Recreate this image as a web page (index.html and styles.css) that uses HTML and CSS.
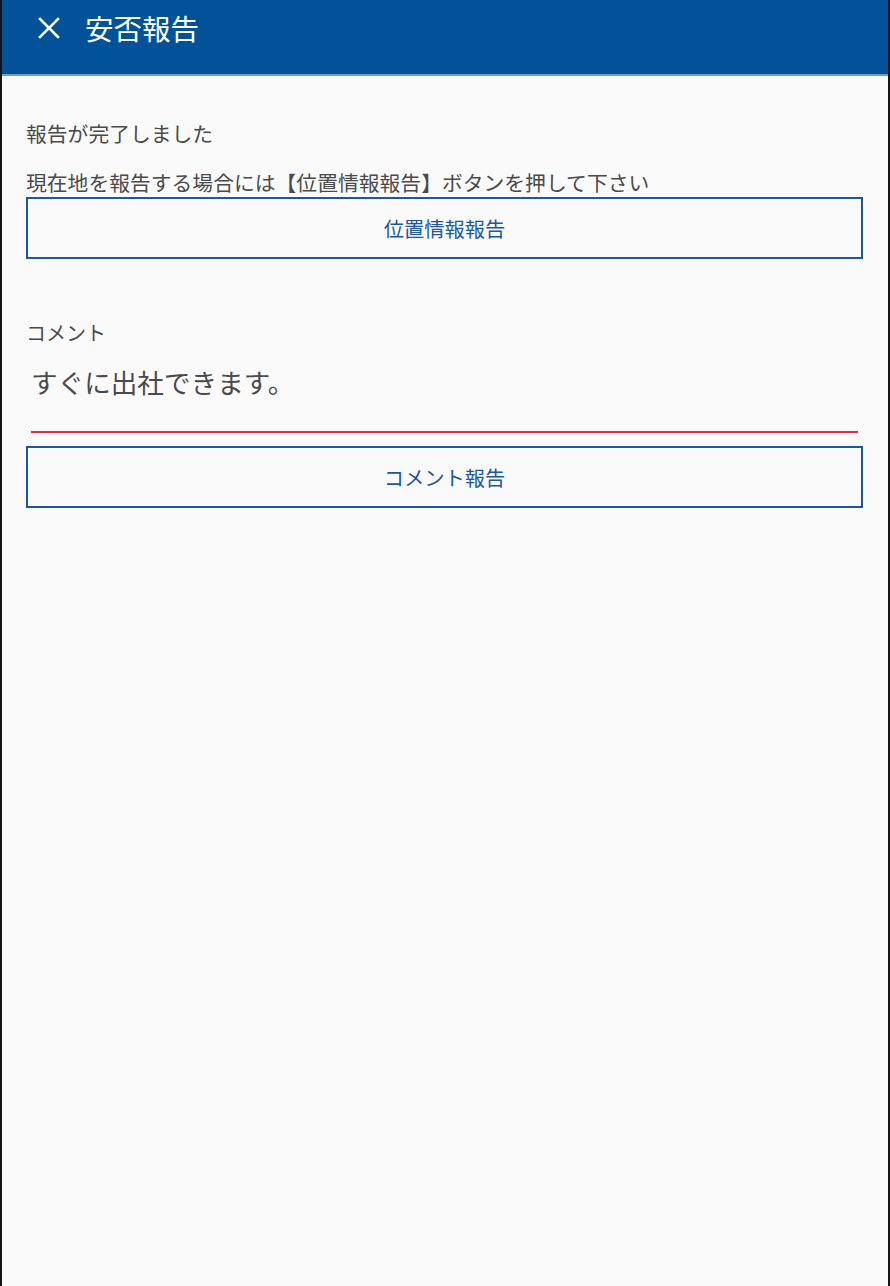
FILE: index.html
```html
<!DOCTYPE html>
<html lang="ja">
<head>
  <meta charset="UTF-8">
  <meta name="viewport" content="width=device-width, initial-scale=1.0">
  <title>安否報告</title>
  <link rel="stylesheet" href="styles.css">
</head>
<body>
  <div class="screen">
    <header class="app-bar">
      <button class="close-btn" aria-label="閉じる">
        <svg width="22" height="22" viewBox="0 0 22 22">
          <path d="M2 2 L20 20 M20 2 L2 20" stroke="#fff" stroke-width="2.6" stroke-linecap="square" fill="none"/>
        </svg>
      </button>
      <h1 class="app-title">安否報告</h1>
    </header>

    <main class="content">
      <p class="message">報告が完了しました</p>
      <p class="message message-second">現在地を報告する場合には【位置情報報告】ボタンを押して下さい</p>
      <button class="btn">位置情報報告</button>

      <label class="field-label" for="comment">コメント</label>
      <div class="field">
        <input id="comment" class="field-input" type="text" value="すぐに出社できます。">
      </div>
      <button class="btn btn-comment">コメント報告</button>
    </main>
  </div>
</body>
</html>
```

FILE: styles.css
```css
:root {
  --primary-color: #02529a;
  --button-color: #1d56a1;
  --text-color: #4a4a4a;
  --bg-color: #fafafa;
  --error-color: #e02a4c;
  --frame-color: #141414;
}

html, body {
  margin: 0;
  padding: 0;
  height: 100%;
  background-color: var(--frame-color);
  font-family: "Noto Sans CJK JP", "Noto Sans", sans-serif;
  color: var(--text-color);
}

.screen {
  height: 1286px;
  margin: 0 2px;
  background-color: var(--bg-color);
  display: flex;
  flex-direction: column;
}

.app-bar {
  height: 76px;
  box-sizing: border-box;
  background-color: var(--primary-color);
  border-bottom: 2px solid #6f9bd4;
  display: flex;
  align-items: center;
  padding-bottom: 18px;
}

.close-btn {
  background: none;
  border: none;
  padding: 0;
  margin-left: 36px;
  width: 22px;
  height: 22px;
  display: flex;
  cursor: pointer;
}

.app-title {
  margin: 0 0 0 25px;
  font-size: 28.5px;
  font-weight: 400;
  color: #ffffff;
  line-height: 40px;
}

.content {
  padding: 42px 25px 0 24px;
  display: flex;
  flex-direction: column;
}

.message {
  margin: 0;
  font-size: 20.8px;
  line-height: 30px;
}

.message-second {
  margin-top: 19px;
}

.btn {
  height: 62px;
  background-color: transparent;
  border: 2px solid var(--button-color);
  color: var(--button-color);
  font-family: inherit;
  font-size: 20.3px;
  padding: 0;
  cursor: pointer;
}

.field-label {
  margin-top: 59px;
  font-size: 20px;
  line-height: 30px;
}

.field {
  margin: 0 5px;
  padding-top: 15px;
  border-bottom: 2px solid var(--error-color);
}

.field-input {
  width: 100%;
  box-sizing: border-box;
  height: 68px;
  padding: 0 0 32px 0;
  border: none;
  background: transparent;
  font-family: inherit;
  font-size: 26.6px;
  line-height: 36px;
  color: var(--text-color);
  outline: none;
}

.btn-comment {
  margin-top: 13px;
}
```
